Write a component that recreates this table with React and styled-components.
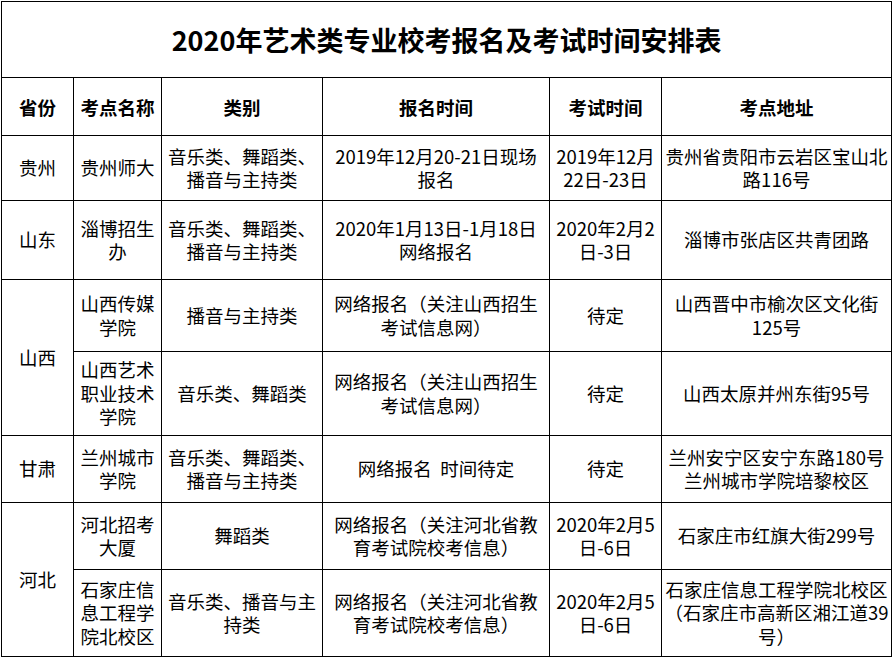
import React from "react";
import styled, { createGlobalStyle } from "styled-components";

const GlobalStyle = createGlobalStyle`
  html, body {
    margin: 0;
    padding: 0;
    background: #fff;
  }
  body {
    font-family: "Noto Sans CJK SC", "Noto Sans", sans-serif;
    color: #000;
  }
`;

const Page = styled.div`
  padding: 1px 0 0 1px;
`;

const Table = styled.table`
  border-collapse: collapse;
  table-layout: fixed;
  width: 890px;
  border: 1px solid #000;
`;

const TitleCell = styled.th`
  height: 75px;
  border: 1px solid #000;
  font-size: 27px;
  font-weight: 700;
  text-align: center;
  vertical-align: middle;
  letter-spacing: 0;
  padding: 0;
`;

const HeadCell = styled.th`
  border: 1px solid #000;
  font-size: 18.5px;
  font-weight: 700;
  text-align: center;
  vertical-align: middle;
  padding: 0;
`;

const Cell = styled.td`
  border: 1px solid #000;
  font-size: 18.5px;
  line-height: 23.5px;
  text-align: center;
  vertical-align: middle;
  padding: 0;
  overflow: visible;
`;

const Line = styled.div`
  white-space: pre;
`;

const Row = styled.tr`
  height: ${(p) => p.$h}px;
`;

const columns = [72, 88, 161, 227, 112, 230];
const headers = ["省份", "考点名称", "类别", "报名时间", "考试时间", "考点地址"];

const rows = [
  {
    h: 65,
    province: "贵州",
    span: 1,
    cells: [
      ["贵州师大"],
      ["音乐类、舞蹈类、", "播音与主持类"],
      ["2019年12月20-21日现场", "报名"],
      ["2019年12月", "22日-23日"],
      ["贵州省贵阳市云岩区宝山北", "路116号"],
    ],
  },
  {
    h: 79,
    province: "山东",
    span: 1,
    cells: [
      ["淄博招生", "办"],
      ["音乐类、舞蹈类、", "播音与主持类"],
      ["2020年1月13日-1月18日", "网络报名"],
      ["2020年2月2", "日-3日"],
      ["淄博市张店区共青团路"],
    ],
  },
  {
    h: 72,
    province: "山西",
    span: 2,
    cells: [
      ["山西传媒", "学院"],
      ["播音与主持类"],
      ["网络报名（关注山西招生", "考试信息网）"],
      ["待定"],
      ["山西晋中市榆次区文化街", "125号"],
    ],
  },
  {
    h: 84,
    cells: [
      ["山西艺术", "职业技术", "学院"],
      ["音乐类、舞蹈类"],
      ["网络报名（关注山西招生", "考试信息网）"],
      ["待定"],
      ["山西太原并州东街95号"],
    ],
  },
  {
    h: 67,
    province: "甘肃",
    span: 1,
    cells: [
      ["兰州城市", "学院"],
      ["音乐类、舞蹈类、", "播音与主持类"],
      ["网络报名  时间待定"],
      ["待定"],
      ["兰州安宁区安宁东路180号", "兰州城市学院培黎校区"],
    ],
  },
  {
    h: 67,
    province: "河北",
    span: 2,
    cells: [
      ["河北招考", "大厦"],
      ["舞蹈类"],
      ["网络报名（关注河北省教", "育考试院校考信息）"],
      ["2020年2月5", "日-6日"],
      ["石家庄市红旗大街299号"],
    ],
  },
  {
    h: 87,
    cells: [
      ["石家庄信", "息工程学", "院北校区"],
      ["音乐类、播音与主", "持类"],
      ["网络报名（关注河北省教", "育考试院校考信息）"],
      ["2020年2月5", "日-6日"],
      ["石家庄信息工程学院北校区", "（石家庄市高新区湘江道39", "号）"],
    ],
  },
];

const Lines = ({ lines }) => (
  <>
    {lines.map((l, i) => (
      <Line key={i}>{l}</Line>
    ))}
  </>
);

const App = () => {
  return (
    <Page>
      <GlobalStyle />
      <Table>
        <colgroup>
          {columns.map((w, i) => (
            <col key={i} style={{ width: w }} />
          ))}
        </colgroup>
        <thead>
          <tr>
            <TitleCell colSpan={6}>2020年艺术类专业校考报名及考试时间安排表</TitleCell>
          </tr>
          <Row $h={58}>
            {headers.map((h) => (
              <HeadCell key={h}>{h}</HeadCell>
            ))}
          </Row>
        </thead>
        <tbody>
          {rows.map((r, i) => (
            <Row key={i} $h={r.h}>
              {r.province && (
                <Cell rowSpan={r.span}>{r.province}</Cell>
              )}
              {r.cells.map((c, j) => (
                <Cell key={j}>
                  <Lines lines={c} />
                </Cell>
              ))}
            </Row>
          ))}
        </tbody>
      </Table>
    </Page>
  );
};

export default App;
